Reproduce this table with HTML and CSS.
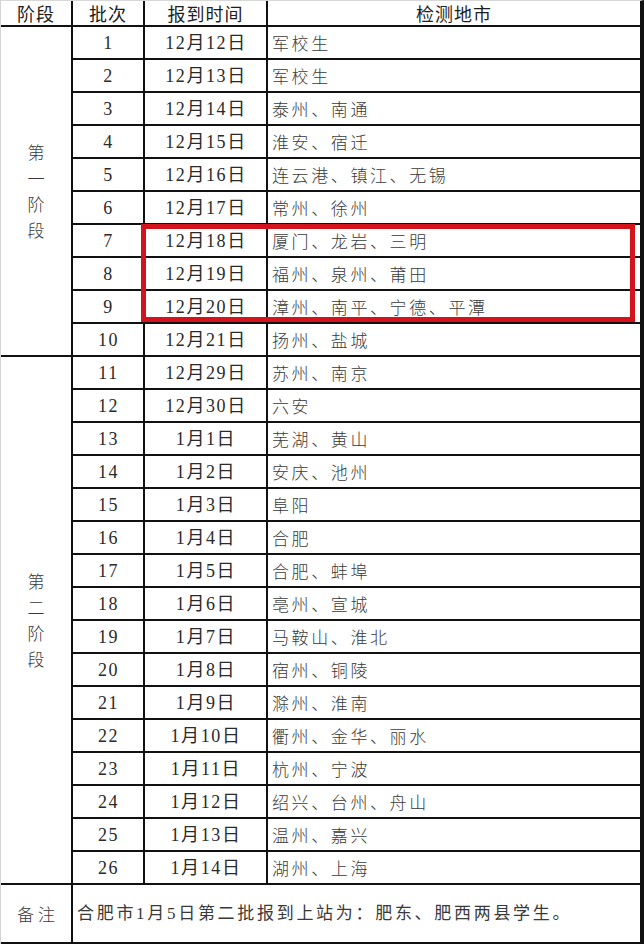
FILE: index.html
```html
<!DOCTYPE html>
<html lang="zh-CN">
<head>
<meta charset="utf-8">
<title>检测安排</title>
<link rel="stylesheet" href="styles.css">
</head>
<body>
<div class="sheet">
  <div class="cell head">阶段</div>
  <div class="cell head">批次</div>
  <div class="cell head">报到时间</div>
  <div class="cell head last">检测地市</div>

  <div class="cell phase p1"><span class="vtext">第一阶段</span></div>
  <div class="cell num">1</div><div class="cell num">12月12日</div><div class="cell city last">军校生</div>
  <div class="cell num">2</div><div class="cell num">12月13日</div><div class="cell city last">军校生</div>
  <div class="cell num">3</div><div class="cell num">12月14日</div><div class="cell city last">泰州、南通</div>
  <div class="cell num">4</div><div class="cell num">12月15日</div><div class="cell city last">淮安、宿迁</div>
  <div class="cell num">5</div><div class="cell num">12月16日</div><div class="cell city last">连云港、镇江、无锡</div>
  <div class="cell num">6</div><div class="cell num">12月17日</div><div class="cell city last">常州、徐州</div>
  <div class="cell num">7</div><div class="cell num">12月18日</div><div class="cell city last">厦门、龙岩、三明</div>
  <div class="cell num">8</div><div class="cell num">12月19日</div><div class="cell city last">福州、泉州、莆田</div>
  <div class="cell num">9</div><div class="cell num">12月20日</div><div class="cell city last">漳州、南平、宁德、平潭</div>
  <div class="cell num">10</div><div class="cell num">12月21日</div><div class="cell city last">扬州、盐城</div>

  <div class="cell phase p2"><span class="vtext">第二阶段</span></div>
  <div class="cell num">11</div><div class="cell num">12月29日</div><div class="cell city last">苏州、南京</div>
  <div class="cell num">12</div><div class="cell num">12月30日</div><div class="cell city last">六安</div>
  <div class="cell num">13</div><div class="cell num">1月1日</div><div class="cell city last">芜湖、黄山</div>
  <div class="cell num">14</div><div class="cell num">1月2日</div><div class="cell city last">安庆、池州</div>
  <div class="cell num">15</div><div class="cell num">1月3日</div><div class="cell city last">阜阳</div>
  <div class="cell num">16</div><div class="cell num">1月4日</div><div class="cell city last">合肥</div>
  <div class="cell num">17</div><div class="cell num">1月5日</div><div class="cell city last">合肥、蚌埠</div>
  <div class="cell num">18</div><div class="cell num">1月6日</div><div class="cell city last">亳州、宣城</div>
  <div class="cell num">19</div><div class="cell num">1月7日</div><div class="cell city last">马鞍山、淮北</div>
  <div class="cell num">20</div><div class="cell num">1月8日</div><div class="cell city last">宿州、铜陵</div>
  <div class="cell num">21</div><div class="cell num">1月9日</div><div class="cell city last">滁州、淮南</div>
  <div class="cell num">22</div><div class="cell num">1月10日</div><div class="cell city last">衢州、金华、丽水</div>
  <div class="cell num">23</div><div class="cell num">1月11日</div><div class="cell city last">杭州、宁波</div>
  <div class="cell num">24</div><div class="cell num">1月12日</div><div class="cell city last">绍兴、台州、舟山</div>
  <div class="cell num">25</div><div class="cell num">1月13日</div><div class="cell city last">温州、嘉兴</div>
  <div class="cell num">26</div><div class="cell num">1月14日</div><div class="cell city last">湖州、上海</div>

  <div class="cell note-label">备注</div>
  <div class="cell note last">合肥市1月5日第二批报到上站为：肥东、肥西两县学生。</div>

  <div class="highlight"></div>
</div>
</body>
</html>
```

FILE: styles.css
```css
html, body {
  margin: 0;
  padding: 0;
  background: #fff;
}

.sheet {
  position: relative;
  width: 644px;
  box-sizing: border-box;
  border-left: 1px solid #d4d4d4;
  border-top: 1px solid #d8d8d8;
  border-right: 4px solid #111;
  display: grid;
  grid-template-columns: 72px 72px 123px 372px;
  grid-template-rows: 26px repeat(26, 33px) 59px;
  font-family: "Liberation Serif", "Noto Sans CJK SC", serif;
  color: #2a2a2a;
}

.cell {
  box-sizing: border-box;
  border-right: 2px solid #111;
  border-bottom: 2px solid #111;
  display: flex;
  align-items: center;
  justify-content: center;
  font-size: 18px;
  line-height: 1;
  white-space: nowrap;
}

.cell.last {
  border-right: none;
}

.head {
  font-family: "Noto Sans CJK SC", sans-serif;
  font-size: 18px;
  line-height: 20px;
  color: #1e1e1e;
  letter-spacing: 1px;
}

.num {
  letter-spacing: 1.6px;
  padding-left: 1px;
}

.city {
  justify-content: flex-start;
  padding-left: 4px;
  font-family: "Noto Sans CJK SC", sans-serif;
  font-weight: 300;
  font-size: 17px;
  letter-spacing: 2.6px;
  color: #3a3a3a;
}

.phase {
  grid-column: 1;
}

.p1 {
  grid-row: 2 / span 10;
}

.p2 {
  grid-row: 12 / span 16;
}

.vtext {
  display: block;
  width: 18px;
  white-space: normal;
  font-family: "Noto Sans CJK SC", sans-serif;
  font-weight: 300;
  font-size: 17px;
  line-height: 26px;
  color: #3a3a3a;
  text-align: center;
}

.note-label {
  font-family: "Noto Sans CJK SC", sans-serif;
  font-weight: 300;
  font-size: 17px;
  letter-spacing: 4px;
  padding-left: 4px;
  color: #3a3a3a;
}

.note {
  grid-column: 2 / 5;
  justify-content: flex-start;
  padding-left: 4px;
  font-size: 17px;
  letter-spacing: 2.7px;
  color: #3a3a3a;
}

.highlight {
  position: absolute;
  left: 140px;
  top: 223px;
  width: 494px;
  height: 98px;
  box-sizing: border-box;
  border: 5px solid #d3141c;
  pointer-events: none;
}
```
